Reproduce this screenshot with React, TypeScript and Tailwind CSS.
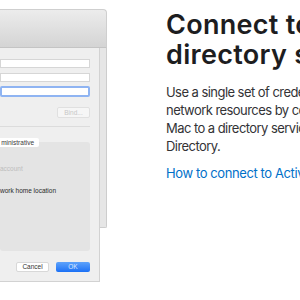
import React from "react";

const dlg = { fontFamily: '"Liberation Sans", Arial, sans-serif' };

export default function App() {
  return (
    <div className="w-[300px] h-[300px] bg-white overflow-hidden flex">
      {/* left: screenshot of macOS dialog */}
      <div className="w-[166px] shrink-0 pt-[9px]" style={dlg}>
        <div className="w-[107px] flex flex-col">
          <div className="h-[39px] rounded-tr-[4px] border-t border-r border-[#cfcfcf] bg-gradient-to-b from-[#ececec] to-[#d4d4d4] border-b border-b-[#c4c4c4]" />
          <div className="flex items-start">
            <div className="w-[100px] h-[234px] shrink-0 bg-[#efefef] border-r border-b border-[#d2d2d2] flex flex-col pr-[9px]">
              <div className="h-[11px]" />
              <div className="h-[9px] bg-white border border-[#d6d6d6]" />
              <div className="h-[5px]" />
              <div className="h-[9px] bg-white border border-[#d6d6d6]" />
              <div className="h-[4px]" />
              <div className="h-[11px] bg-white border-2 border-[#8fb4f2] rounded-[2px]" />
              <div className="h-[10px]" />
              <div className="flex justify-end">
                <div className="w-[33px] h-[11px] bg-[#f6f6f6] border border-[#e0e0e0] rounded-[2px] text-[6.5px] leading-[9px] text-[#c6c6c6] text-center">
                  Bind...
                </div>
              </div>
              <div className="h-[8px]" />
              <div className="h-px bg-[#dcdcdc]" />
              <div className="h-[15px]" />
              <div className="relative">
                <div className="absolute left-0 -top-[4px] w-[39px] h-[9px] bg-white rounded-r-[2px] text-[6.5px] leading-[9px] text-[#3a3a3a] pr-[5px] overflow-hidden whitespace-nowrap z-10 flex justify-end">
                  <span>ministrative</span>
                </div>
                <div className="h-[109px] bg-[#e4e4e4] rounded-[3px] flex flex-col">
                  <div className="h-[22px]" />
                  <div className="text-[6.5px] leading-[10px] text-[#bdbdbd] whitespace-nowrap">account</div>
                  <div className="h-[12px]" />
                  <div className="text-[6.5px] leading-[10px] text-[#2a2a2a] whitespace-nowrap">work home location</div>
                </div>
              </div>
              <div className="h-[11px]" />
              <div className="flex justify-end gap-[7px]">
                <div className="w-[33px] h-[10px] bg-white border border-[#d8d8d8] rounded-[2px] text-[6.5px] leading-[8px] text-[#333] text-center">
                  Cancel
                </div>
                <div className="w-[34px] h-[10px] bg-gradient-to-b from-[#5da2fb] to-[#1a70f5] rounded-[2px] text-[6.5px] leading-[10px] text-[#dce9ff] text-center">
                  OK
                </div>
              </div>
            </div>
            <div className="w-[7px] h-[180px] bg-[#e6e6e6] border-r border-b border-[#cdcdcd] rounded-br-[2px]" />
          </div>
        </div>
      </div>

      {/* right: article text */}
      <div className="flex-1 overflow-hidden pt-[10px]" style={{ fontFamily: 'Inter, "Liberation Sans", sans-serif' }}>
        <div className="whitespace-nowrap text-[27px] leading-[30px] font-semibold text-[#1d1d1f] tracking-[0.3px]">
          <div>Connect to Active</div>
          <div>directory services</div>
        </div>
        <div className="mt-[13px] whitespace-nowrap text-[13px] leading-[18px] text-[#333336] tracking-[-0.55px]">
          <div>Use a single set of credentials to access</div>
          <div>network resources by connecting your</div>
          <div>Mac to a directory service such as Active</div>
          <div>Directory.</div>
        </div>
        <div className="mt-[9px] whitespace-nowrap text-[13px] leading-[18px] text-[#0070c9] tracking-[-0.4px]">
          How to connect to Active Directory
        </div>
      </div>
    </div>
  );
}
